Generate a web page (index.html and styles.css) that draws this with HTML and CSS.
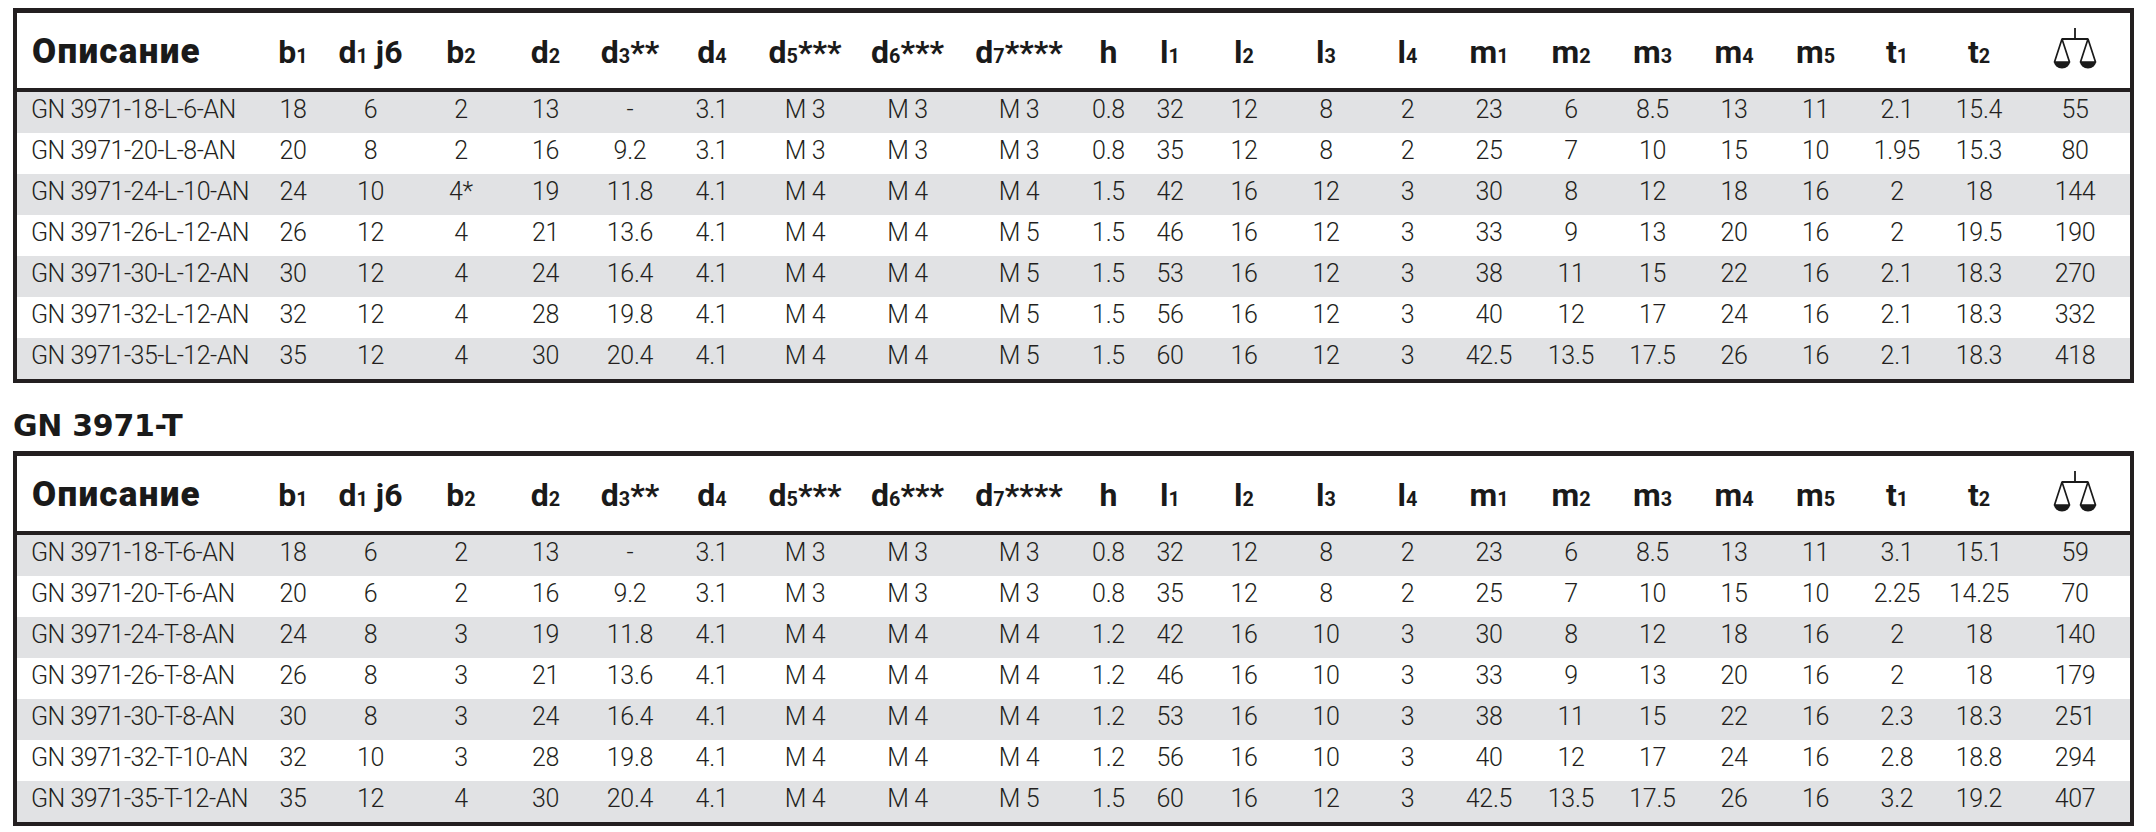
FILE: index.html
```html
<!DOCTYPE html>
<html lang="ru">
<head>
<meta charset="utf-8">
<title>GN 3971</title>
<link rel="stylesheet" href="styles.css">
</head>
<body>
<div class="page">
  <table class="spec">
    <colgroup>
      <col class="w-desc"><col class="w56"><col class="w99"><col class="w82"><col class="w87"><col class="w82"><col class="w82"><col class="w104"><col class="w101"><col class="w122"><col class="w57"><col class="w66"><col class="w82"><col class="w82"><col class="w81"><col class="w82"><col class="w82"><col class="w81"><col class="w82"><col class="w81"><col class="w82"><col class="w82"><col class="w110">
    </colgroup>
    <thead>
      <tr>
        <th class="desc">Описание</th>
        <th>b<span class="sub">1</span></th>
        <th>d<span class="sub">1</span> j6</th>
        <th>b<span class="sub">2</span></th>
        <th>d<span class="sub">2</span></th>
        <th>d<span class="sub">3</span>**</th>
        <th>d<span class="sub">4</span></th>
        <th>d<span class="sub">5</span>***</th>
        <th>d<span class="sub">6</span>***</th>
        <th>d<span class="sub">7</span>****</th>
        <th>h</th>
        <th>l<span class="sub">1</span></th>
        <th>l<span class="sub">2</span></th>
        <th>l<span class="sub">3</span></th>
        <th>l<span class="sub">4</span></th>
        <th>m<span class="sub">1</span></th>
        <th>m<span class="sub">2</span></th>
        <th>m<span class="sub">3</span></th>
        <th>m<span class="sub">4</span></th>
        <th>m<span class="sub">5</span></th>
        <th>t<span class="sub">1</span></th>
        <th>t<span class="sub">2</span></th>
        <th><svg class="scale" viewBox="0 0 46 42" width="46" height="42" aria-label="вес"><path d="M23 1V12M10 12H36" fill="none" stroke="#1a1a1a" stroke-width="1.8"/><path d="M10 12L2.5 35H17.5Z M36 12L28.5 35H43.5Z" fill="none" stroke="#1a1a1a" stroke-width="1.7" stroke-linejoin="round"/><path d="M2 35A8 6.5 0 0 0 18 35Z M28 35A8 6.5 0 0 0 44 35Z" fill="#1a1a1a"/></svg></th>
      </tr>
    </thead>
    <tbody>
      <tr><td class="desc">GN 3971-18-L-6-AN</td><td>18</td><td>6</td><td>2</td><td>13</td><td>-</td><td>3.1</td><td>M 3</td><td>M 3</td><td>M 3</td><td>0.8</td><td>32</td><td>12</td><td>8</td><td>2</td><td>23</td><td>6</td><td>8.5</td><td>13</td><td>11</td><td>2.1</td><td>15.4</td><td>55</td></tr>
      <tr><td class="desc">GN 3971-20-L-8-AN</td><td>20</td><td>8</td><td>2</td><td>16</td><td>9.2</td><td>3.1</td><td>M 3</td><td>M 3</td><td>M 3</td><td>0.8</td><td>35</td><td>12</td><td>8</td><td>2</td><td>25</td><td>7</td><td>10</td><td>15</td><td>10</td><td>1.95</td><td>15.3</td><td>80</td></tr>
      <tr><td class="desc">GN 3971-24-L-10-AN</td><td>24</td><td>10</td><td>4*</td><td>19</td><td>11.8</td><td>4.1</td><td>M 4</td><td>M 4</td><td>M 4</td><td>1.5</td><td>42</td><td>16</td><td>12</td><td>3</td><td>30</td><td>8</td><td>12</td><td>18</td><td>16</td><td>2</td><td>18</td><td>144</td></tr>
      <tr><td class="desc">GN 3971-26-L-12-AN</td><td>26</td><td>12</td><td>4</td><td>21</td><td>13.6</td><td>4.1</td><td>M 4</td><td>M 4</td><td>M 5</td><td>1.5</td><td>46</td><td>16</td><td>12</td><td>3</td><td>33</td><td>9</td><td>13</td><td>20</td><td>16</td><td>2</td><td>19.5</td><td>190</td></tr>
      <tr><td class="desc">GN 3971-30-L-12-AN</td><td>30</td><td>12</td><td>4</td><td>24</td><td>16.4</td><td>4.1</td><td>M 4</td><td>M 4</td><td>M 5</td><td>1.5</td><td>53</td><td>16</td><td>12</td><td>3</td><td>38</td><td>11</td><td>15</td><td>22</td><td>16</td><td>2.1</td><td>18.3</td><td>270</td></tr>
      <tr><td class="desc">GN 3971-32-L-12-AN</td><td>32</td><td>12</td><td>4</td><td>28</td><td>19.8</td><td>4.1</td><td>M 4</td><td>M 4</td><td>M 5</td><td>1.5</td><td>56</td><td>16</td><td>12</td><td>3</td><td>40</td><td>12</td><td>17</td><td>24</td><td>16</td><td>2.1</td><td>18.3</td><td>332</td></tr>
      <tr><td class="desc">GN 3971-35-L-12-AN</td><td>35</td><td>12</td><td>4</td><td>30</td><td>20.4</td><td>4.1</td><td>M 4</td><td>M 4</td><td>M 5</td><td>1.5</td><td>60</td><td>16</td><td>12</td><td>3</td><td>42.5</td><td>13.5</td><td>17.5</td><td>26</td><td>16</td><td>2.1</td><td>18.3</td><td>418</td></tr>
    </tbody>
  </table>

  <h2 class="title">GN 3971-T</h2>

  <table class="spec">
    <colgroup>
      <col class="w-desc"><col class="w56"><col class="w99"><col class="w82"><col class="w87"><col class="w82"><col class="w82"><col class="w104"><col class="w101"><col class="w122"><col class="w57"><col class="w66"><col class="w82"><col class="w82"><col class="w81"><col class="w82"><col class="w82"><col class="w81"><col class="w82"><col class="w81"><col class="w82"><col class="w82"><col class="w110">
    </colgroup>
    <thead>
      <tr>
        <th class="desc">Описание</th>
        <th>b<span class="sub">1</span></th>
        <th>d<span class="sub">1</span> j6</th>
        <th>b<span class="sub">2</span></th>
        <th>d<span class="sub">2</span></th>
        <th>d<span class="sub">3</span>**</th>
        <th>d<span class="sub">4</span></th>
        <th>d<span class="sub">5</span>***</th>
        <th>d<span class="sub">6</span>***</th>
        <th>d<span class="sub">7</span>****</th>
        <th>h</th>
        <th>l<span class="sub">1</span></th>
        <th>l<span class="sub">2</span></th>
        <th>l<span class="sub">3</span></th>
        <th>l<span class="sub">4</span></th>
        <th>m<span class="sub">1</span></th>
        <th>m<span class="sub">2</span></th>
        <th>m<span class="sub">3</span></th>
        <th>m<span class="sub">4</span></th>
        <th>m<span class="sub">5</span></th>
        <th>t<span class="sub">1</span></th>
        <th>t<span class="sub">2</span></th>
        <th><svg class="scale" viewBox="0 0 46 42" width="46" height="42" aria-label="вес"><path d="M23 1V12M10 12H36" fill="none" stroke="#1a1a1a" stroke-width="1.8"/><path d="M10 12L2.5 35H17.5Z M36 12L28.5 35H43.5Z" fill="none" stroke="#1a1a1a" stroke-width="1.7" stroke-linejoin="round"/><path d="M2 35A8 6.5 0 0 0 18 35Z M28 35A8 6.5 0 0 0 44 35Z" fill="#1a1a1a"/></svg></th>
      </tr>
    </thead>
    <tbody>
      <tr><td class="desc">GN 3971-18-T-6-AN</td><td>18</td><td>6</td><td>2</td><td>13</td><td>-</td><td>3.1</td><td>M 3</td><td>M 3</td><td>M 3</td><td>0.8</td><td>32</td><td>12</td><td>8</td><td>2</td><td>23</td><td>6</td><td>8.5</td><td>13</td><td>11</td><td>3.1</td><td>15.1</td><td>59</td></tr>
      <tr><td class="desc">GN 3971-20-T-6-AN</td><td>20</td><td>6</td><td>2</td><td>16</td><td>9.2</td><td>3.1</td><td>M 3</td><td>M 3</td><td>M 3</td><td>0.8</td><td>35</td><td>12</td><td>8</td><td>2</td><td>25</td><td>7</td><td>10</td><td>15</td><td>10</td><td>2.25</td><td>14.25</td><td>70</td></tr>
      <tr><td class="desc">GN 3971-24-T-8-AN</td><td>24</td><td>8</td><td>3</td><td>19</td><td>11.8</td><td>4.1</td><td>M 4</td><td>M 4</td><td>M 4</td><td>1.2</td><td>42</td><td>16</td><td>10</td><td>3</td><td>30</td><td>8</td><td>12</td><td>18</td><td>16</td><td>2</td><td>18</td><td>140</td></tr>
      <tr><td class="desc">GN 3971-26-T-8-AN</td><td>26</td><td>8</td><td>3</td><td>21</td><td>13.6</td><td>4.1</td><td>M 4</td><td>M 4</td><td>M 4</td><td>1.2</td><td>46</td><td>16</td><td>10</td><td>3</td><td>33</td><td>9</td><td>13</td><td>20</td><td>16</td><td>2</td><td>18</td><td>179</td></tr>
      <tr><td class="desc">GN 3971-30-T-8-AN</td><td>30</td><td>8</td><td>3</td><td>24</td><td>16.4</td><td>4.1</td><td>M 4</td><td>M 4</td><td>M 4</td><td>1.2</td><td>53</td><td>16</td><td>10</td><td>3</td><td>38</td><td>11</td><td>15</td><td>22</td><td>16</td><td>2.3</td><td>18.3</td><td>251</td></tr>
      <tr><td class="desc">GN 3971-32-T-10-AN</td><td>32</td><td>10</td><td>3</td><td>28</td><td>19.8</td><td>4.1</td><td>M 4</td><td>M 4</td><td>M 4</td><td>1.2</td><td>56</td><td>16</td><td>10</td><td>3</td><td>40</td><td>12</td><td>17</td><td>24</td><td>16</td><td>2.8</td><td>18.8</td><td>294</td></tr>
      <tr><td class="desc">GN 3971-35-T-12-AN</td><td>35</td><td>12</td><td>4</td><td>30</td><td>20.4</td><td>4.1</td><td>M 4</td><td>M 4</td><td>M 5</td><td>1.5</td><td>60</td><td>16</td><td>12</td><td>3</td><td>42.5</td><td>13.5</td><td>17.5</td><td>26</td><td>16</td><td>3.2</td><td>19.2</td><td>407</td></tr>
    </tbody>
  </table>
</div>
</body>
</html>
```
FILE: styles.css
```css
html, body {
  margin: 0;
  padding: 0;
  background: #ffffff;
}

.page {
  padding: 8px 0 0 13px;
  font-family: Roboto, "Liberation Sans", sans-serif;
  color: #231f20;
}

.spec {
  table-layout: fixed;
  width: 2121px;
  border-collapse: separate;
  border-spacing: 0;
  border: 4px solid #231f20;
  border-top-width: 5px;
}

.w-desc { width: 248px; }
.w56 { width: 56px; }
.w57 { width: 57px; }
.w66 { width: 66px; }
.w81 { width: 81px; }
.w82 { width: 82px; }
.w87 { width: 87px; }
.w99 { width: 99px; }
.w101 { width: 101px; }
.w104 { width: 104px; }
.w110 { width: 110px; }
.w122 { width: 122px; }

.spec th {
  padding: 8px 0 0 0;
  height: 62px;
  line-height: 62px;
  font-size: 32px;
  font-weight: 700;
  color: #1a1a1a;
  text-align: center;
  white-space: nowrap;
  border-bottom: 4px solid #231f20;
  box-sizing: content-box;
  vertical-align: top;
}

.spec th.desc {
  text-align: left;
  padding-left: 15px;
  font-size: 35px;
  font-weight: 900;
  letter-spacing: 1.3px;
}

.sub {
  font-size: 0.62em;
  font-weight: 700;
  letter-spacing: 0;
}

.scale {
  display: inline-block;
  vertical-align: -6px;
}

.spec td {
  padding: 0 0 6px 0;
  line-height: 35px;
  font-size: 25px;
  font-weight: 300;
  color: #231f20;
  text-align: center;
  white-space: nowrap;
  letter-spacing: -0.3px;
}

.spec td.desc {
  text-align: left;
  padding-left: 14px;
  letter-spacing: -0.5px;
}

.spec tbody tr:nth-child(odd) td {
  background: #e1e2e4;
}

.title {
  margin: 25px 0 7px 0;
  font-family: "DejaVu Sans", Roboto, sans-serif;
  font-size: 30px;
  line-height: 36px;
  font-weight: 700;
  color: #1a1a1a;
  letter-spacing: -0.3px;
}
```
